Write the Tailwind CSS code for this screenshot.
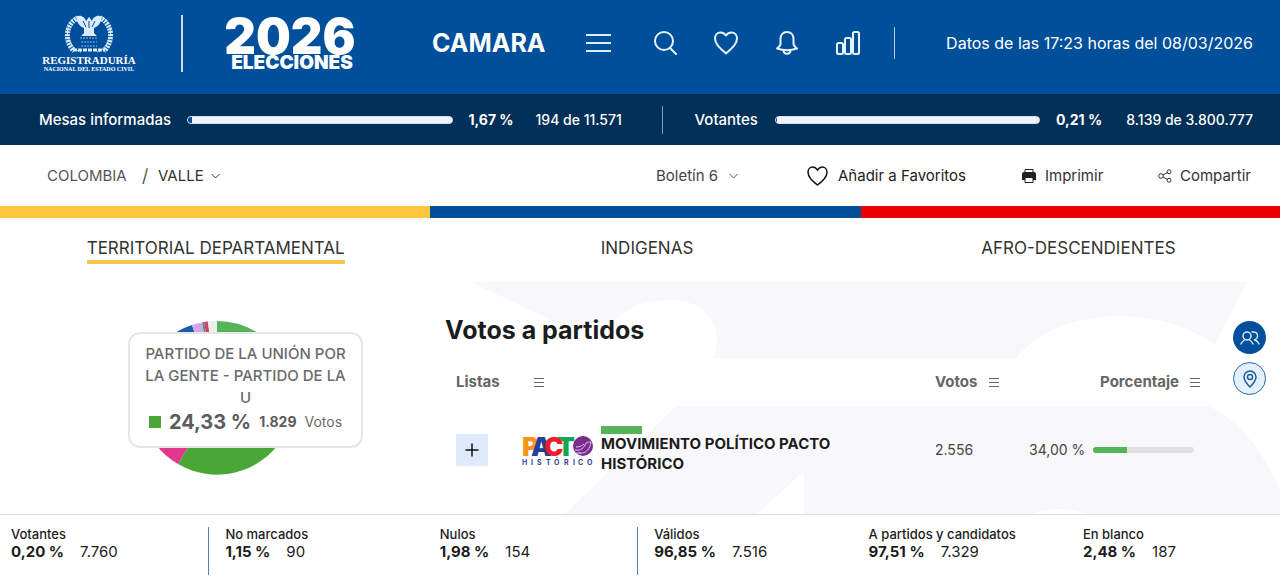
<!DOCTYPE html>
<html lang="es">

<head>
    <meta charset="UTF-8">
    <meta name="viewport" content="width=device-width, initial-scale=1.0">
    <title>Elecciones 2026 - Cámara</title>
    <script src="https://cdn.jsdelivr.net/npm/@tailwindcss/browser@4"></script>
</head>

<body class="bg-white text-[#212529] font-['Inter',sans-serif] overflow-x-hidden">
    <!-- Header -->
    <header class="flex items-center h-[94px] pb-2 pl-10 pr-[27px] bg-[#004f9b] text-white">
        <a href="#" aria-label="Registraduría Nacional del Estado Civil" class="shrink-0">
            <svg class="w-[98px] h-[60px]" viewBox="0 0 98 60" fill="none" stroke="#d9ecff">
                <g stroke-width="5" stroke-dasharray="2 1">
                    <path d="M36 6C26 12 24 28 34 38" />
                    <path d="M62 6c10 6 12 22 2 32" />
                </g>
                <path d="M37 3c-8 4-12 16-8 24s8 11 12 12M61 3c8 4 12 16 8 24s-8 11-12 12" stroke-dasharray="3 1" />
                <path d="M36 4c4-3 9 0 10 4l3-4 3 4c1-4 6-7 10-4-1 7-5 10-8 11v5l3 3H41l3-3v-5c-3-1-7-4-8-11z" fill="#d9ecff" stroke="none" />
                <path d="M43 8l3 6M55 8l-3 6M49 8v7" stroke="#004f9b" />
                <path d="M40 25h18M41 29h16M41 33h16" stroke-dasharray="2 1" stroke="#8fbce6" />
                <path d="M33 37h32" stroke-width="3" stroke-dasharray="4 1" />
                <text x="49" y="51" text-anchor="middle" font-family="Liberation Serif, serif" font-weight="700" font-size="11" fill="#fff" stroke="none">REGISTRADURÍA</text>
                <text x="49" y="58" text-anchor="middle" font-family="Liberation Serif, serif" font-weight="700" font-size="6" fill="#fff" stroke="none">NACIONAL DEL ESTADO CIVIL</text>
            </svg>
        </a>
        <div class="w-[2px] h-[57px] ml-[43px] mr-10 bg-white/80"></div>
        <a href="#" aria-label="Elecciones 2026" class="shrink-0">
            <svg class="w-[134px] h-[54px] overflow-visible" viewBox="0 0 134 54" fill="#fff" font-family="Inter, sans-serif" font-weight="900">
                <text x="67" y="38" text-anchor="middle" font-size="49">2026</text>
                <text x="69" y="53" text-anchor="middle" font-size="19">ELECCIONES</text>
            </svg>
        </a>
        <h1 class="w-[154px] ml-[75px] text-[25px] leading-8 font-bold">CAMARA</h1>
        <nav class="flex items-center shrink-0">
            <button type="button" aria-label="Menú" class="w-[25px] mr-[42px]">
                <svg class="w-[25px] h-6" viewBox="0 0 25 24" stroke="#d9f0ff" stroke-width="2">
                    <path d="M0 4h25M0 12h25M0 20h25" />
                </svg>
            </button>
            <button type="button" aria-label="Buscar" class="w-6 mr-9">
                <svg class="size-6" viewBox="0 0 24 24" fill="none" stroke="#e6f4ff" stroke-width="2">
                    <circle cx="11" cy="10" r="9" />
                    <path d="M17 17l6 6" stroke-linecap="round" />
                </svg>
            </button>
            <button type="button" aria-label="Favoritos" class="w-[26px] mr-9">
                <svg class="w-[26px] h-6" viewBox="0 0 26 24" fill="none" stroke="#e6f4ff" stroke-width="2" stroke-linejoin="round">
                    <path d="M13 4.500C11.500 2.300 9.500 1.500 7.500 1.500 4 1.500 2 4.300 2 7.500 2 13 7 17 13 22.500 19 17 24 13 24 7.500 24 4.300 22 1.500 18.500 1.500c-2 0-4 .8-5.500 3z" />
                </svg>
            </button>
            <button type="button" aria-label="Notificaciones" class="w-6 mr-9">
                <svg class="size-6" viewBox="0 0 24 24" fill="none" stroke="#e6f4ff" stroke-width="2" stroke-linejoin="round">
                    <path d="M12 1C8 1 5.500 4 5.500 8v4.500c0 2-1.500 3.500-3.500 5 6 2 14 2 20 0-2-1.500-3.500-3-3.500-5V8C18.500 4 16 1 12 1z" />
                    <path d="M8.500 19c0 5 7 5 7 0" />
                </svg>
            </button>
            <button type="button" aria-label="Gráficos" class="w-[26px]">
                <svg class="w-[26px] h-6" viewBox="0 0 26 24" fill="none" stroke="#e6f4ff" stroke-width="2">
                    <rect x="2" y="12" width="6" height="11" rx="1.500" />
                    <rect x="10" y="7" width="6" height="16" rx="1.500" />
                    <rect x="18" y="1" width="6" height="22" rx="1.500" />
                </svg>
            </button>
        </nav>
        <div class="w-px h-8 ml-[33px] bg-white/70"></div>
        <p class="ml-auto text-base leading-6 whitespace-nowrap">Datos de las 17:23 horas del 08/03/2026</p>
    </header>

    <!-- Progress bar -->
    <section class="flex items-center h-[51px] pl-[39px] pr-[27px] bg-[#002f57] text-white text-sm leading-5 font-medium whitespace-nowrap">
        <span class="w-[148px] text-[15px]">Mesas informadas</span>
        <div class="flex-1 h-2 rounded-full bg-[#f2f1f4] border border-[#cfe0f2] overflow-hidden">
            <div class="h-full bg-[#004f9b]" style="width: 1.67%"></div>
        </div>
        <b class="w-[67px] ml-4 font-bold">1,67 %</b>
        <span class="w-[126px]">194 de 11.571</span>
        <div class="w-px h-7 mr-8 bg-[#7b9cc0]"></div>
        <span class="w-20 text-[15px]">Votantes</span>
        <div class="flex-1 h-2 rounded-full bg-[#f2f1f4] border border-[#cfe0f2] overflow-hidden">
            <div class="h-full bg-[#004f9b]" style="width: 0.21%"></div>
        </div>
        <b class="w-[67px] ml-4 font-bold">0,21 %</b>
        <span class="w-[130px] text-right">8.139 de 3.800.777</span>
    </section>

    <!-- Breadcrumb and actions -->
    <section class="flex items-center h-[61px] pl-[47px] pr-[27px] text-[15px] leading-5 text-[#333] whitespace-nowrap">
        <a href="#" class="w-[95px] text-[#555]">COLOMBIA</a>
        <span class="w-4 text-lg leading-5 font-light">/</span>
        <label class="flex items-center">
            <select aria-label="Departamento" class="appearance-none w-[53px] bg-transparent">
                <option>VALLE</option>
            </select>
            <svg class="w-[9px] h-[6px]" viewBox="0 0 9 6" fill="none" stroke="#333"><path d="M.5 1l4 4 4-4" /></svg>
        </label>
        <div class="flex items-center ml-auto">
            <label class="flex items-center w-[151px] text-[#444]">
                <select aria-label="Boletín" class="appearance-none w-[73px] bg-transparent">
                    <option>Boletín 6</option>
                </select>
                <svg class="w-[9px] h-[6px]" viewBox="0 0 9 6" fill="none" stroke="#555"><path d="M.5 1l4 4 4-4" /></svg>
            </label>
            <button type="button" class="flex items-center gap-[10px] w-[215px] text-[#222]">
                <svg class="w-[21px] h-5" viewBox="0 0 21 20" fill="none" stroke="#111" stroke-width="1.500"><path d="M10.500 4C9 1.800 7.500 1 5.800 1 3 1 1 3.300 1 6.200 1 11 5 14.500 10.500 19 16 14.500 20 11 20 6.200 20 3.300 18 1 15.200 1c-1.700 0-3.200.8-4.700 3z" /></svg>
                Añadir a Favoritos
            </button>
            <button type="button" class="flex items-center gap-[9px] w-[136px]">
                <svg class="w-[14px] h-4" viewBox="0 0 14 16" fill="#222">
                    <path d="M3 5V1.500h8V5" fill="none" stroke="#222" />
                    <path d="M2 4h10a2 2 0 012 2v6H0V6a2 2 0 012-2z" />
                    <path d="M3 9.500h8v5H3z" fill="#fff" stroke="#222" />
                </svg>
                Imprimir
            </button>
            <button type="button" class="flex items-center gap-2 w-[95px]">
                <svg class="w-[14px] h-[14px]" viewBox="0 0 14 14" fill="none" stroke="#333">
                    <circle cx="3" cy="7" r="2.300" />
                    <circle cx="11" cy="2.800" r="2" />
                    <circle cx="11" cy="11.200" r="2" />
                    <path d="M5 6l4.500-2.500M5 8l4.500 2.500" />
                </svg>
                Compartir
            </button>
        </div>
    </section>

    <!-- Flag stripe -->
    <div class="flex h-3">
        <div class="w-[33.6%] bg-[#fdc63c]"></div>
        <div class="w-[33.7%] bg-[#004f9b]"></div>
        <div class="flex-1 bg-[#ea0000]"></div>
    </div>

    <!-- Tabs -->
    <nav class="flex h-16 pt-[18px] overflow-hidden text-[17px] leading-6 text-[#333]">
        <div class="w-[33.7%] shrink-0 text-center"><a href="#" class="inline-block border-b-4 border-[#f3c64b]">TERRITORIAL DEPARTAMENTAL</a></div>
        <div class="w-[33.7%] shrink-0 text-center"><a href="#" class="inline-block">INDIGENAS</a></div>
        <div class="w-[33.7%] shrink-0 text-center"><a href="#" class="inline-block">AFRO-DESCENDIENTES</a></div>
    </nav>

    <!-- Results -->
    <main class="relative flex min-h-[232px] overflow-hidden">
        <svg class="absolute right-0 top-0 w-[820px] h-[232px] -z-10" viewBox="460 282 820 232" fill="#f8f8fa">
            <path d="M470 282H1247L1215 344C1150 302 1058 308 1016 358H714C724 325 706 300 670 300 645 300 624 309 612 323L560 324z" />
            <path d="M565 514L676 406H1208C1240 420 1265 455 1280 490V514H1085Q1058 504 1032 514H804V471L757 514z" />
        </svg>

        <div class="relative w-[445px] shrink-0 pt-9 pl-[137px]">
            <svg class="size-40" viewBox="0 0 160 160">
                <path d="M80 80V3A77 77 0 01145 121z" fill="#55b457" />
                <path d="M80 80L145 121A77 77 0 0141 146z" fill="#49a835" />
                <path d="M80 80L41 146A77 77 0 0113 41z" fill="#e0398b" />
                <path d="M80 80L13 41A77 77 0 0155 7z" fill="#1560ac" />
                <path d="M80 80L55 7A77 77 0 0165 4.500z" fill="#d8a4ee" />
                <path d="M80 80L65 4.500A77 77 0 0167 4z" fill="#4a9a5a" />
                <path d="M80 80L67 4A77 77 0 0171 3.500z" fill="#c9407d" />
                <path d="M80 80L71 3.500A77 77 0 0180 3z" fill="#eee" />
            </svg>
            <div class="absolute left-32 top-[50px] w-[235px] h-[116px] pt-[9px] rounded-xl border-2 border-[#e6e6e6] bg-white text-center text-[15px] leading-[22px] font-medium text-[#6a6a6a] whitespace-nowrap">
                <p>PARTIDO DE LA UNIÓN POR<br>LA GENTE - PARTIDO DE LA<br>U</p>
                <div class="flex items-center justify-center gap-2 pt-px text-sm">
                    <span class="size-3 bg-[#49a835]"></span>
                    <b class="text-xl leading-6 font-bold text-[#5c5c5c]">24,33 %</b>
                    <b class="font-bold text-[#5c5c5c]">1.829</b>
                    <span class="font-normal">Votos</span>
                </div>
            </div>
        </div>

        <section class="flex-1 pt-8 pr-20">
            <h2 class="text-[25px] leading-8 font-bold text-[#1c1c1c]">Votos a partidos</h2>
            <table class="w-full mt-4 table-fixed text-[15px] leading-5 text-left">
                <thead class="text-[#666]">
                    <tr class="h-10">
                        <th class="w-[77px] pl-[11px] font-bold">Listas</th>
                        <th>
                            <button type="button" aria-label="Ordenar listas" class="block ml-3">
                                <svg class="w-[10px] h-[10px]" viewBox="0 0 10 10" stroke="#666"><path d="M0 1.500h10M0 5.500h10M0 9.500h10" /></svg>
                            </button>
                        </th>
                        <th class="w-[94px] font-bold">
                            <div class="flex items-center justify-between w-16">Votos
                                <button type="button" aria-label="Ordenar por votos">
                                    <svg class="w-[10px] h-[10px]" viewBox="0 0 10 10" stroke="#666"><path d="M0 1.500h10M0 5.500h10M0 9.500h10" /></svg>
                                </button>
                            </div>
                        </th>
                        <th class="w-[171px] font-bold">
                            <div class="flex items-center justify-end gap-[11px]">Porcentaje
                                <button type="button" aria-label="Ordenar por porcentaje">
                                    <svg class="w-[10px] h-[10px]" viewBox="0 0 10 10" stroke="#666"><path d="M0 1.500h10M0 5.500h10M0 9.500h10" /></svg>
                                </button>
                            </div>
                        </th>
                    </tr>
                </thead>
                <tbody>
                    <tr class="h-24">
                        <td class="pl-[11px]">
                            <button type="button" aria-label="Desplegar" class="flex items-center justify-center size-8 bg-[#dfebfd]">
                                <svg class="size-[14px]" viewBox="0 0 14 14" stroke="#111" stroke-width="1.500"><path d="M7 .5v13M.5 7h13" /></svg>
                            </button>
                        </td>
                        <td>
                            <div class="flex items-center gap-2">
                                <svg class="w-[71px] h-[30px] shrink-0 overflow-visible" viewBox="0 0 71 30" font-family="Inter, sans-serif" font-weight="900" font-size="26">
                                    <text x="0" y="21" fill="#f7941e">P</text>
                                    <text x="9" y="21" fill="#20409a">A</text>
                                    <text x="35" y="21" fill="#12a650">T</text>
                                    <text x="22" y="21" fill="#ed1c2e">C</text>
                                    <circle cx="61" cy="11" r="10" fill="#7b2c8f" />
                                    <path d="M53 15c6 1 9-2 11-7 2-1 3-1 5-1-1 7-5 12-12 11M54 12c4 0 6-1 8-3M54 18h5" fill="none" stroke="#e3c4ec" />
                                    <text y="30" x="0 9 15 24 32 42 51 56 65" font-size="7" font-weight="700" fill="#2b3f94">HISTÓRICO</text>
                                </svg>
                                <div class="w-[245px] text-[#1c1c1c]">
                                    <div class="w-[41px] h-2 bg-[#55b457]"></div>
                                    <p class="font-bold">MOVIMIENTO POLÍTICO PACTO HISTÓRICO</p>
                                </div>
                            </div>
                        </td>
                        <td class="text-[#444] text-sm">2.556</td>
                        <td class="text-[#444] text-sm">
                            <div class="flex items-center pr-[6px]">
                                <span class="w-16 whitespace-nowrap">34,00 %</span>
                                <div class="flex-1 h-[6px] rounded-full bg-[#e0e0e0] overflow-hidden">
                                    <div class="h-full bg-[#55b457]" style="width: 34%"></div>
                                </div>
                            </div>
                        </td>
                    </tr>
                </tbody>
            </table>
        </section>

        <!-- Floating buttons -->
        <div class="absolute right-[14px] top-[39px] flex flex-col gap-2">
            <button type="button" aria-label="Candidatos" class="flex items-center justify-center size-[33px] rounded-full bg-[#004f9b]">
                <svg class="w-5 h-[14px]" viewBox="0 0 20 14" fill="none" stroke="#d5eaff" stroke-width="1.500" stroke-linecap="round">
                    <circle cx="7" cy="5" r="4" />
                    <path d="M1 13c1-2 2-3 3.500-4M9.500 9c1.500 1 2.500 2 3.500 4M12 1c7-1 7 7 2 8 2 0 4 2 5 4" />
                </svg>
            </button>
            <button type="button" aria-label="Mapa" class="flex items-center justify-center size-[33px] rounded-full border border-[#2d689f] bg-[#e3f0fe]">
                <svg class="w-[14px] h-[18px]" viewBox="0 0 14 18" fill="none" stroke="#1e5c9c" stroke-width="1.500">
                    <path d="M7 17C4 14 1 11 1 7a6 6 0 0112 0c0 4-3 7-6 10z" />
                    <circle cx="7" cy="7" r="2.500" />
                </svg>
            </button>
        </div>
    </main>

    <!-- Totals -->
    <footer class="flex pt-3 pb-[6px] border-t border-[#ddd] bg-white overflow-hidden text-[15px] leading-[22px] text-[#1c1c1c] whitespace-nowrap">
        <div class="w-[16.75%] shrink-0 pl-[11px] pr-[5px]">
            <dl class="h-12 border-r border-[#4d80b0]">
                <dt class="text-[13px] leading-[14px] font-medium">Votantes</dt>
                <dd><b class="mr-4 font-bold">0,20 %</b>7.760</dd>
            </dl>
        </div>
        <div class="w-[16.75%] shrink-0 pl-[11px]">
            <dl>
                <dt class="text-[13px] leading-[14px] font-medium">No marcados</dt>
                <dd><b class="mr-4 font-bold">1,15 %</b>90</dd>
            </dl>
        </div>
        <div class="w-[16.75%] shrink-0 pl-[11px] pr-[5px]">
            <dl class="h-12 border-r border-[#4d80b0]">
                <dt class="text-[13px] leading-[14px] font-medium">Nulos</dt>
                <dd><b class="mr-4 font-bold">1,98 %</b>154</dd>
            </dl>
        </div>
        <div class="w-[16.75%] shrink-0 pl-[11px]">
            <dl>
                <dt class="text-[13px] leading-[14px] font-medium">Válidos</dt>
                <dd><b class="mr-4 font-bold">96,85 %</b>7.516</dd>
            </dl>
        </div>
        <div class="w-[16.75%] shrink-0 pl-[11px]">
            <dl>
                <dt class="text-[13px] leading-[14px] font-medium">A partidos y candidatos</dt>
                <dd><b class="mr-4 font-bold">97,51 %</b>7.329</dd>
            </dl>
        </div>
        <div class="w-[16.75%] shrink-0 pl-[11px]">
            <dl>
                <dt class="text-[13px] leading-[14px] font-medium">En blanco</dt>
                <dd><b class="mr-4 font-bold">2,48 %</b>187</dd>
            </dl>
        </div>
    </footer>
</body>

</html>
